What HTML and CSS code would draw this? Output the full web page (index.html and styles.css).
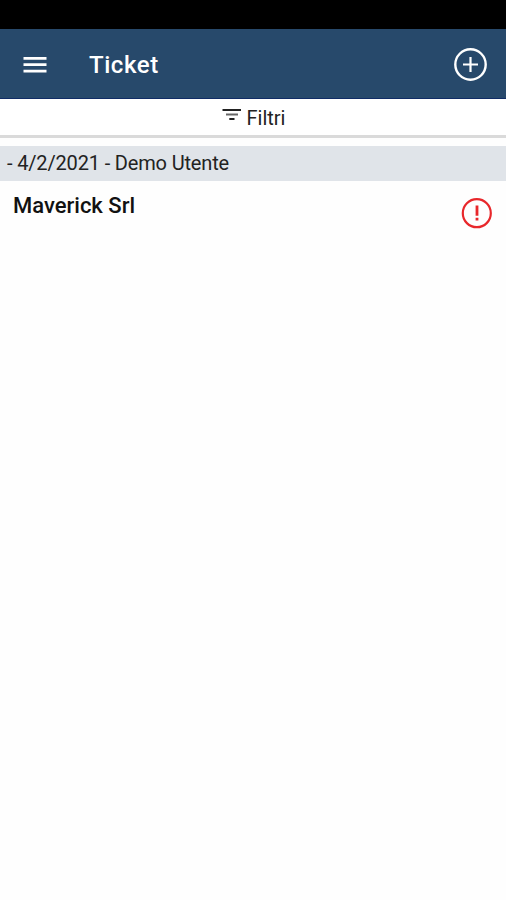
FILE: index.html
```html
<!DOCTYPE html>
<html lang="it">
    <head>
        <meta charset="UTF-8">
        <title>Ticket</title>
        <link rel="stylesheet" href="styles.css">
    </head>
    <body>
        <div class="status-bar"></div>
        <header class="toolbar">
            <svg class="menu" width="24" height="18" viewBox="0 0 24 18">
                <path d="M0.5 2.3h23M0.5 8.7h23M0.5 15.1h23" stroke="#fff" stroke-width="2.8"/>
            </svg>
            <h1 class="title">Ticket</h1>
            <svg class="add" width="34" height="34" viewBox="0 0 34 34" fill="none" stroke="#fff">
                <circle cx="16.5" cy="16.5" r="15.2" stroke-width="2.4"/>
                <path d="M16.5 9v15M9 16.5h15" stroke-width="2.2"/>
            </svg>
        </header>
        <div class="filters">
            <svg class="filter-icon" width="20" height="14" viewBox="0 0 20 14" stroke="#222" stroke-width="2">
                <path d="M0.5 2h18.5M7.3 11h5.2"/>
                <path d="M4 6.5h12" stroke="#666"/>
            </svg>
            <span>Filtri</span>
        </div>
        <main class="list">
            <div class="divider">- 4/2/2021 - Demo Utente</div>
            <div class="item">
                <span class="name">Maverick Srl</span>
                <svg class="alert" width="32" height="32" viewBox="0 0 32 32" fill="none" stroke="#e8272b">
                    <circle cx="15.8" cy="16.2" r="14" stroke-width="2.2"/>
                    <path d="M16 8.5v10.3M16 20.8v2.7" stroke-width="2.8"/>
                </svg>
            </div>
        </main>
    </body>
</html>
```

FILE: styles.css
```css
body {
    margin: 0;
    background-color: #fefefe;
    font-family: Roboto, sans-serif;
    color: #222;
}
.status-bar {
    height: 29px;
    background-color: #000;
}
.toolbar {
    display: flex;
    align-items: center;
    box-sizing: border-box;
    height: 70px;
    padding: 0 18px 0 23px;
    background-color: #27496b;
    border-bottom: 1px solid #102c66;
}
.title {
    flex: 1;
    margin: 3px 0 0 42px;
    font-size: 24px;
    line-height: 28px;
    font-weight: 500;
    letter-spacing: 0.55px;
    color: #fff;
}
.menu,
.add {
    margin-top: 2px;
}
.filters {
    display: flex;
    justify-content: center;
    gap: 5px;
    box-sizing: border-box;
    height: 39px;
    padding: 7px 0 0 1px;
    background-color: #fff;
    border-bottom: 3px solid #dadada;
    font-size: 20px;
    line-height: 24px;
}
.filter-icon {
    margin-top: 2px;
}
.list {
    padding-top: 8px;
}
.divider {
    height: 35px;
    padding-left: 7px;
    background-color: #e0e4e9;
    font-size: 20px;
    line-height: 35px;
    letter-spacing: -0.16px;
}
.item {
    display: flex;
    justify-content: space-between;
    padding: 12px 13px 0;
}
.name {
    font-size: 22px;
    line-height: 26px;
    font-weight: 500;
    color: #111;
}
.alert {
    margin-top: 4px;
}
```
